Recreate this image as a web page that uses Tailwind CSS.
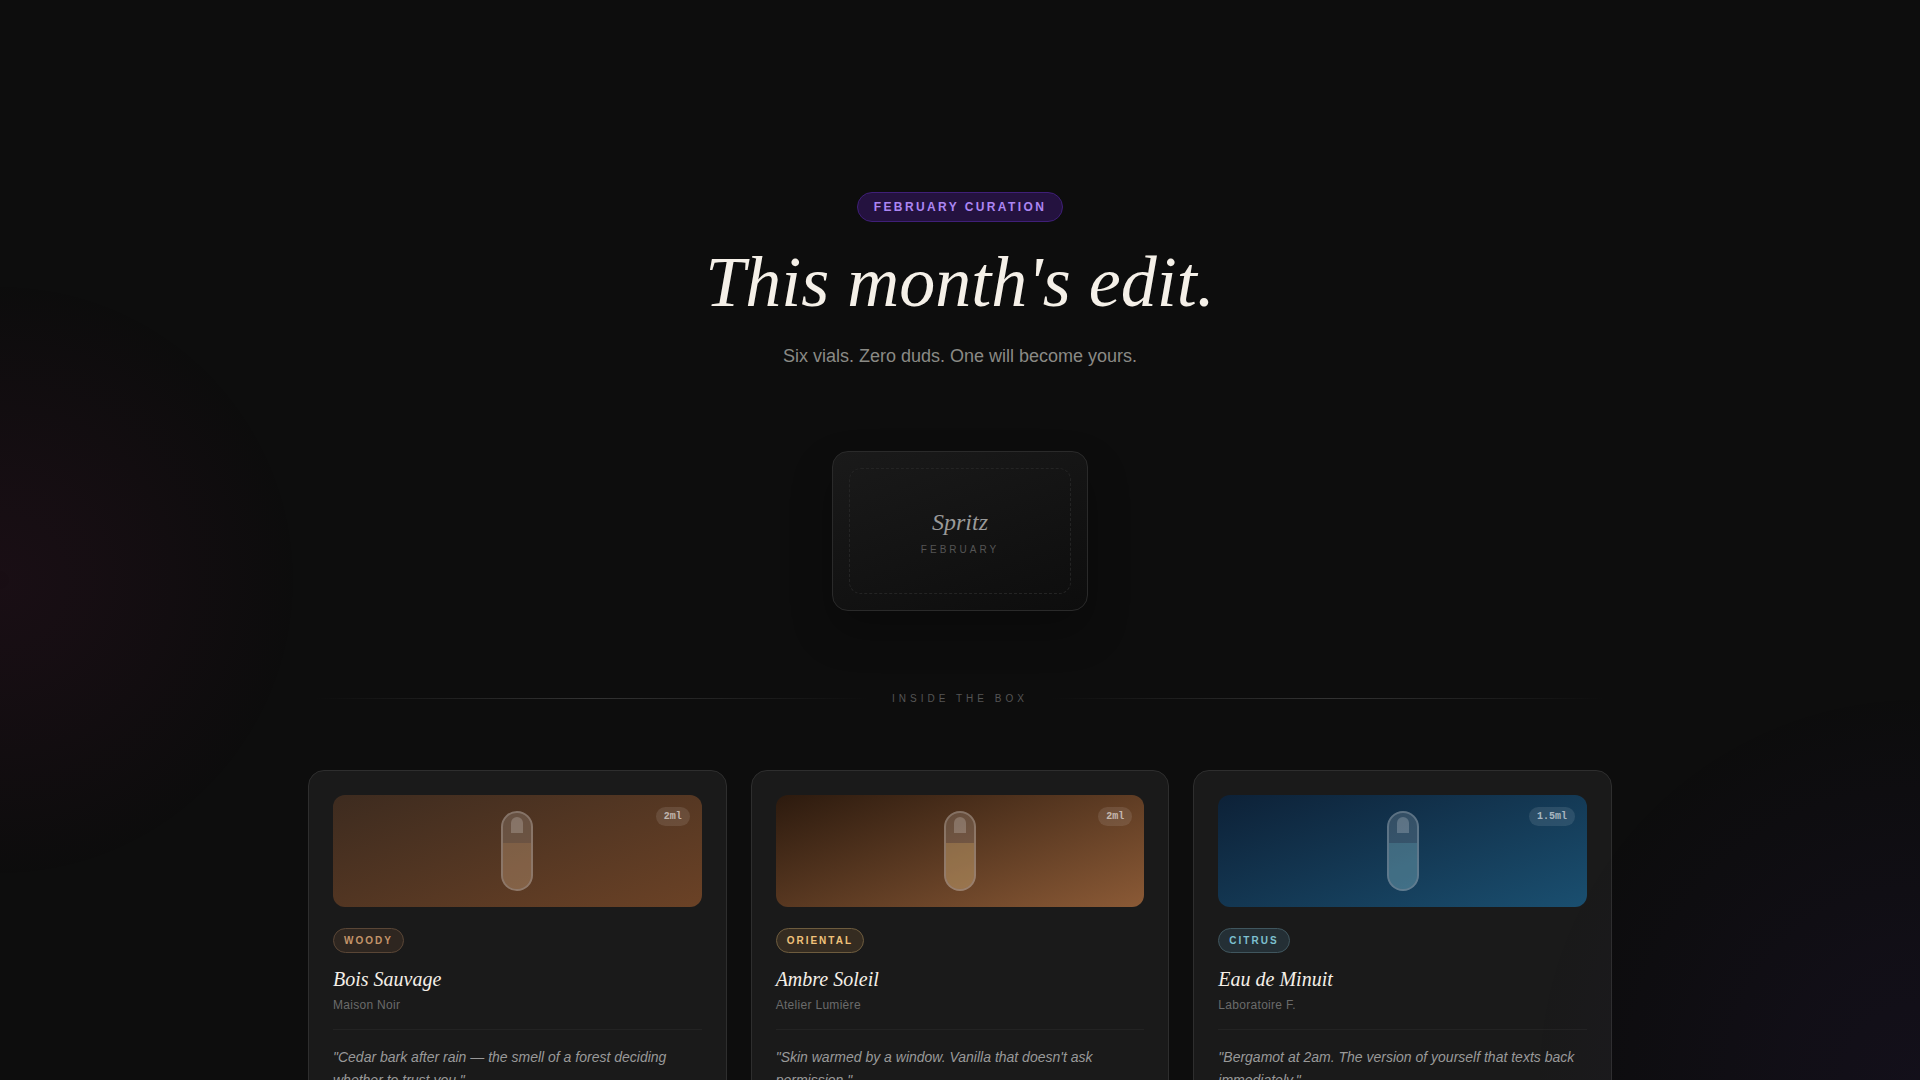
<!DOCTYPE html>
<html lang="en">
<head>
  <meta charset="UTF-8">
  <meta name="viewport" content="width=device-width, initial-scale=1.0">
  <title>Spritz | February Curation</title>
  <script src="https://cdn.jsdelivr.net/npm/@tailwindcss/browser@4"></script>
</head>
<body class="min-h-screen overflow-x-hidden bg-[#0d0d0d] text-[#f5f0e8] font-['Liberation_Sans',sans-serif]">

<!-- Ambient glows -->
<div class="fixed inset-0 z-10 pointer-events-none bg-[radial-gradient(circle_300px_at_0_580px,rgba(170,30,110,0.08),rgba(170,30,110,0.06)_30%,transparent),radial-gradient(circle_390px_at_100%_1080px,rgba(100,50,200,0.07),rgba(100,50,200,0.05)_35%,transparent)]"></div>

<main class="mx-auto max-w-[1400px] px-12 pt-48 pb-24">
  <!-- Hero -->
  <header class="flex flex-col items-center text-center">
    <span class="rounded-full border border-[#3f1f78] bg-[#24123f] px-4 py-1.5 text-xs font-bold tracking-[0.2em] text-[#ac86f3]">FEBRUARY CURATION</span>
    <h1 class="mt-5 text-[72px] leading-20 italic font-['Liberation_Serif',serif]">This month's edit.</h1>
    <p class="mt-5 text-lg leading-[29px] text-[#8a8a85]">Six vials. Zero duds. One will become yours.</p>
  </header>

  <!-- Box -->
  <div class="relative mx-auto mt-20 flex h-40 w-64 flex-col items-center justify-center rounded-2xl border border-[#2a2a2a] bg-linear-[160deg,#1a1a1a,#0d0d0d] pt-0.5 shadow-[0_20px_40px_rgba(0,0,0,0.25)]">
    <div class="absolute inset-4 rounded-xl border border-dashed border-[#242424]"></div>
    <p class="text-2xl italic text-[#999] font-['Liberation_Serif',serif]">Spritz</p>
    <p class="mt-1 text-[10px] leading-4 tracking-[3px] text-[#555]">FEBRUARY</p>
  </div>

  <!-- Divider -->
  <div class="mt-20 flex items-center gap-6 px-2">
    <div class="h-px flex-1 bg-linear-to-r from-transparent via-[#333] to-transparent"></div>
    <h2 class="text-[10px] leading-[15px] tracking-[4px] text-[#555]">INSIDE THE BOX</h2>
    <div class="h-px flex-1 bg-linear-to-r from-transparent via-[#333] to-transparent"></div>
  </div>

  <!-- Vials -->
  <div class="mt-16 grid grid-cols-3 gap-6">
    <article class="rounded-2xl border border-[#2e2e2e] bg-[#1a1a1a] p-6">
      <div class="relative flex h-28 items-center justify-center rounded-xl bg-linear-[160deg,#3d2b1f,#6b4226]">
        <div class="relative h-20 w-8 overflow-hidden rounded-full border-2 border-white/20 bg-white/15">
          <div class="absolute inset-x-0 bottom-0 h-[46px] bg-[#b8824f]/25"></div>
          <div class="absolute top-1 left-2 h-4 w-3 rounded-t-full bg-white/20"></div>
        </div>
        <span class="absolute top-3 right-3 rounded-full bg-white/10 px-2 py-0.5 text-[10px] leading-[15px] font-bold text-white/60 font-['Liberation_Mono',monospace]">2ml</span>
      </div>
      <span class="mt-[21px] block w-fit rounded-full border border-[#5a4636] bg-[#2e2620] px-2.5 py-1 text-[10px] leading-[15px] font-bold tracking-[2px] text-[#c4956a]">WOODY</span>
      <h3 class="mt-3 text-xl leading-7 italic font-['Liberation_Serif',serif]">Bois Sauvage</h3>
      <p class="mt-0.5 text-xs leading-5 tracking-wide text-[#6b6b6b]">Maison Noir</p>
      <p class="mt-3.5 border-t border-[#232323] pt-4 text-sm leading-[23px] italic text-[#999]">"Cedar bark after rain — the smell of a forest deciding whether to trust you."</p>
    </article>

    <article class="rounded-2xl border border-[#2e2e2e] bg-[#1a1a1a] p-6">
      <div class="relative flex h-28 items-center justify-center rounded-xl bg-linear-[160deg,#2c1a0e,#8b5a36]">
        <div class="relative h-20 w-8 overflow-hidden rounded-full border-2 border-white/20 bg-white/15">
          <div class="absolute inset-x-0 bottom-0 h-[46px] bg-[#d4a55a]/30"></div>
          <div class="absolute top-1 left-2 h-4 w-3 rounded-t-full bg-white/20"></div>
        </div>
        <span class="absolute top-3 right-3 rounded-full bg-white/10 px-2 py-0.5 text-[10px] leading-[15px] font-bold text-white/60 font-['Liberation_Mono',monospace]">2ml</span>
      </div>
      <span class="mt-[21px] block w-fit rounded-full border border-[#6e5c3e] bg-[#352c21] px-2.5 py-1 text-[10px] leading-[15px] font-bold tracking-[2px] text-[#f0c27a]">ORIENTAL</span>
      <h3 class="mt-3 text-xl leading-7 italic font-['Liberation_Serif',serif]">Ambre Soleil</h3>
      <p class="mt-0.5 text-xs leading-5 tracking-wide text-[#6b6b6b]">Atelier Lumière</p>
      <p class="mt-3.5 border-t border-[#232323] pt-4 text-sm leading-[23px] italic text-[#999]">"Skin warmed by a window. Vanilla that doesn't ask permission."</p>
    </article>

    <article class="rounded-2xl border border-[#2e2e2e] bg-[#1a1a1a] p-6">
      <div class="relative flex h-28 items-center justify-center rounded-xl bg-linear-[160deg,#0d2137,#1a4f70]">
        <div class="relative h-20 w-8 overflow-hidden rounded-full border-2 border-white/20 bg-white/15">
          <div class="absolute inset-x-0 bottom-0 h-[46px] bg-[#5fb0c0]/25"></div>
          <div class="absolute top-1 left-2 h-4 w-3 rounded-t-full bg-white/20"></div>
        </div>
        <span class="absolute top-3 right-3 rounded-full bg-white/10 px-2 py-0.5 text-[10px] leading-[15px] font-bold text-white/60 font-['Liberation_Mono',monospace]">1.5ml</span>
      </div>
      <span class="mt-[21px] block w-fit rounded-full border border-[#40565e] bg-[#242f35] px-2.5 py-1 text-[10px] leading-[15px] font-bold tracking-[2px] text-[#7ec0d0]">CITRUS</span>
      <h3 class="mt-3 text-xl leading-7 italic font-['Liberation_Serif',serif]">Eau de Minuit</h3>
      <p class="mt-0.5 text-xs leading-5 tracking-wide text-[#6b6b6b]">Laboratoire F.</p>
      <p class="mt-3.5 border-t border-[#232323] pt-4 text-sm leading-[23px] italic text-[#999]">"Bergamot at 2am. The version of yourself that texts back immediately."</p>
    </article>
  </div>
</main>
</body>
</html>
